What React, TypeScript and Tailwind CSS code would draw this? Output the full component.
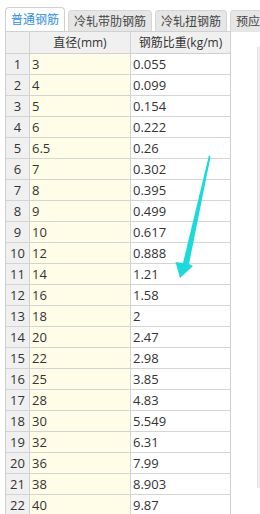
import React from "react";

const rows: [string, string][] = [
  ["3", "0.055"],
  ["4", "0.099"],
  ["5", "0.154"],
  ["6", "0.222"],
  ["6.5", "0.26"],
  ["7", "0.302"],
  ["8", "0.395"],
  ["9", "0.499"],
  ["10", "0.617"],
  ["12", "0.888"],
  ["14", "1.21"],
  ["16", "1.58"],
  ["18", "2"],
  ["20", "2.47"],
  ["22", "2.98"],
  ["25", "3.85"],
  ["28", "4.83"],
  ["30", "5.549"],
  ["32", "6.31"],
  ["36", "7.99"],
  ["38", "8.903"],
  ["40", "9.87"],
];

const tabs = ["冷轧带肋钢筋", "冷轧扭钢筋", "预应力钢筋"];

const App = () => {
  return (
    <div
      className="relative w-[260px] h-[514px] overflow-hidden bg-white text-[#333] text-[13px]"
      style={{ fontFamily: '"Open Sans", "Noto Sans CJK SC", sans-serif' }}
    >
      {/* tab bar */}
      <div className="flex items-end h-[32px] pl-[5px] gap-[3px] whitespace-nowrap">
        <div className="h-[25px] px-[5px] flex items-center bg-white border border-b-0 border-[#d0d0d0] rounded-t-[4px] text-[#2f8ee6] text-[12px]">
          普通钢筋
        </div>
        {tabs.map((t) => (
          <div
            key={t}
            className="h-[22px] px-[5px] flex items-center bg-[#e6e6e6] border border-b-0 border-[#d6d6d6] rounded-t-[4px] text-[12px] text-[#444] shrink-0"
          >
            {t}
          </div>
        ))}
      </div>

      <div className="flex">
        {/* table */}
        <div className="ml-[5px] border-l border-t border-[#d0d0d0] -mt-px">
          <div className="flex h-[22px] border-b border-[#d0d0d0] bg-[#f0f0f0] text-[12px]">
            <div className="w-[24px] border-r border-[#d0d0d0]" />
            <div className="w-[101px] border-r border-[#d0d0d0] flex items-center justify-center">
              直径(mm)
            </div>
            <div className="w-[100px] border-r border-[#d0d0d0] flex items-center justify-center">
              钢筋比重(kg/m)
            </div>
          </div>
          {rows.map(([d, w], i) => (
            <div key={i} className="flex h-[21px] border-b border-[#d4d4d4]">
              <div className="w-[24px] border-r border-[#d0d0d0] bg-[#f0f0f0] flex items-center justify-center pt-[2px]">
                {i + 1}
              </div>
              <div className="w-[101px] border-r border-[#d4d4d4] bg-[#fffde8] flex items-center pl-[2px] pt-[2px]">
                {d}
              </div>
              <div className="w-[100px] border-r border-[#d0d0d0] flex items-center pl-[2px] pt-[2px]">
                {w}
              </div>
            </div>
          ))}
        </div>

        {/* side panel edge */}
        <div className="ml-[26px] mt-[15px] w-[4px] h-[441px] bg-[#ececec] border-l border-[#e2e2e2]" />
      </div>

      {/* annotation arrow */}
      <svg
        className="absolute left-0 top-0 pointer-events-none"
        width="260"
        height="514"
        viewBox="0 0 260 514"
      >
        <polygon
          points="209,155 210.5,157 189,264 193,266 180,278 175.5,262 183,263"
          fill="#1cdada"
        />
      </svg>
    </div>
  );
};

export default App;
